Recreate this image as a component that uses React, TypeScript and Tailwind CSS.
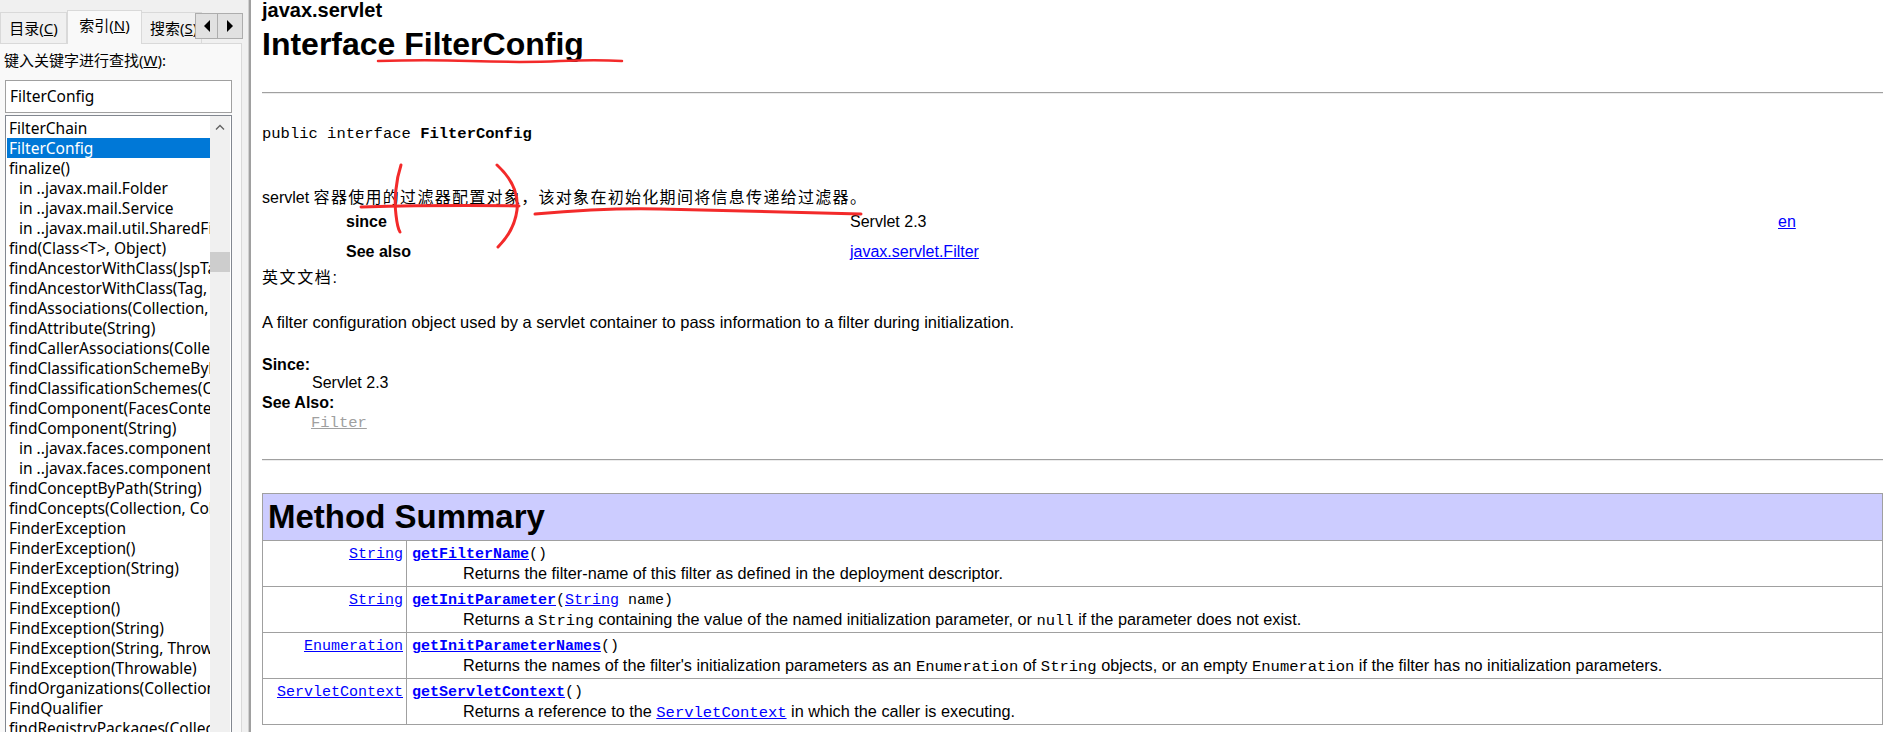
import React from 'react';

const ui = "font-['Noto_Sans','Noto_Sans_CJK_SC',sans-serif]";
const doc = "font-['Liberation_Sans','Noto_Sans_CJK_SC',sans-serif]";
const mono = "font-['Liberation_Mono','Noto_Sans_CJK_SC',monospace]";

type Item = { text: string; indent?: boolean; selected?: boolean };

const items: Item[] = [
  { text: 'FilterChain' },
  { text: 'FilterConfig', selected: true },
  { text: 'finalize()' },
  { text: 'in ..javax.mail.Folder', indent: true },
  { text: 'in ..javax.mail.Service', indent: true },
  { text: 'in ..javax.mail.util.SharedFileInputStream', indent: true },
  { text: 'find(Class<T>, Object)' },
  { text: 'findAncestorWithClass(JspTag, Class)' },
  { text: 'findAncestorWithClass(Tag, Class)' },
  { text: 'findAssociations(Collection, String)' },
  { text: 'findAttribute(String)' },
  { text: 'findCallerAssociations(Collection)' },
  { text: 'findClassificationSchemeByName(Collection)' },
  { text: 'findClassificationSchemes(Collection)' },
  { text: 'findComponent(FacesContext)' },
  { text: 'findComponent(String)' },
  { text: 'in ..javax.faces.component.UIComponent', indent: true },
  { text: 'in ..javax.faces.component.UIComponentBase', indent: true },
  { text: 'findConceptByPath(String)' },
  { text: 'findConcepts(Collection, Collection)' },
  { text: 'FinderException' },
  { text: 'FinderException()' },
  { text: 'FinderException(String)' },
  { text: 'FindException' },
  { text: 'FindException()' },
  { text: 'FindException(String)' },
  { text: 'FindException(String, Throwable)' },
  { text: 'FindException(Throwable)' },
  { text: 'findOrganizations(Collection)' },
  { text: 'FindQualifier' },
  { text: 'findRegistryPackages(Collection)' },
];

function Tri({ dir }: { dir: 'left' | 'right' }) {
  return (
    <svg width="8" height="12" viewBox="0 0 8 12">
      {dir === 'left' ? <path d="M7 0 L1 6 L7 12 Z" fill="#000" /> : <path d="M1 0 L7 6 L1 12 Z" fill="#000" />}
    </svg>
  );
}

function LeftPane() {
  return (
    <div className={`w-[249px] shrink-0 h-full bg-[#f0f0f0] flex ${ui}`}>
      <div className="w-[242px] h-full flex flex-col">
        {/* tab strip */}
        <div className="h-[43px] shrink-0 relative flex items-end">
          <div className="h-[31px] w-[67px] border border-b-0 border-[#d9d9d9] flex items-center justify-center text-[15px] text-black">
            目录(<span className="underline">C</span>)
          </div>
          <div className="h-[34px] w-[75px] border border-b-0 border-[#d9d9d9] bg-[#f9f9f9] flex items-center justify-center text-[15px] text-black -mb-px z-10 pb-[4px]">
            索引(<span className="underline">N</span>)
          </div>
          <div className="h-[31px] w-[60px] border border-b-0 border-l-0 border-[#d9d9d9] flex items-center pl-[8px] text-[15px] text-black overflow-hidden whitespace-nowrap">
            搜索(<span className="underline">S</span>)
          </div>
          <div className="absolute left-[195px] top-[13px] flex">
            <div className="w-[23px] h-[26px] bg-[#e1e1e1] border border-[#adadad] flex items-center justify-center">
              <Tri dir="left" />
            </div>
            <div className="w-[25px] h-[26px] bg-[#e1e1e1] border border-l-0 border-[#adadad] flex items-center justify-center">
              <Tri dir="right" />
            </div>
          </div>
        </div>
        {/* tab page */}
        <div className="flex-1 bg-[#f9f9f9] border-t border-r border-[#d9d9d9] relative overflow-hidden">
          <div className="h-[30px] pt-[4px] pl-[4px] text-[15px] leading-[24px] text-black whitespace-nowrap">
            键入关键字进行查找(<span className="underline">W</span>):
          </div>
          <div className="ml-[5px] mt-[6px] w-[227px] h-[33px] bg-white border border-[#a0a0a0] pl-[4px] text-[15.5px] leading-[30px] text-black">
            FilterConfig
          </div>
          <div className="ml-[5px] mt-[2px] w-[227px] h-[700px] bg-white border border-[#828790] flex">
            <div className="w-[204px] pt-[2px] overflow-hidden">
              {items.map((it, i) => (
                <div
                  key={i}
                  className={`h-[20px] ml-px pl-[2px] text-[15.5px] leading-[20px] whitespace-nowrap ${
                    it.selected ? 'bg-[#0078d7] text-white' : 'text-black'
                  }`}
                >
                  {it.indent ? <span className="pl-[10px]">{it.text}</span> : it.text}
                </div>
              ))}
            </div>
            <div className="w-[20px] bg-[#f0f0f0] flex flex-col items-center">
              <div className="h-[22px] flex items-center justify-center">
                <svg width="10" height="6" viewBox="0 0 10 6">
                  <path d="M1 5.5 L5 1.5 L9 5.5" fill="none" stroke="#606060" strokeWidth="1.3" />
                </svg>
              </div>
              <div className="mt-[114px] w-[20px] h-[20px] bg-[#cdcdcd]" />
            </div>
          </div>
        </div>
      </div>
      <div className="flex-1 border-r border-[#d0d0d0]" />
    </div>
  );
}

const code = `${mono} text-[15.5px]`;

const rows = [
  {
    type: 'String',
    name: 'getFilterName',
    args: <>()</>,
    desc: <>Returns the filter-name of this filter as defined in the deployment descriptor.</>,
  },
  {
    type: 'String',
    name: 'getInitParameter',
    args: (
      <>
        (<span className="text-[#0000ff] underline">String</span>&nbsp;name)
      </>
    ),
    desc: (
      <>
        Returns a <span className={code}>String</span> containing the value of the named initialization parameter, or{' '}
        <span className={code}>null</span> if the parameter does not exist.
      </>
    ),
  },
  {
    type: 'Enumeration',
    name: 'getInitParameterNames',
    args: <>()</>,
    desc: (
      <>
        Returns the names of the filter's initialization parameters as an <span className={code}>Enumeration</span> of{' '}
        <span className={code}>String</span> objects, or an empty <span className={code}>Enumeration</span> if the filter
        has no initialization parameters.
      </>
    ),
  },
  {
    type: 'ServletContext',
    name: 'getServletContext',
    args: <>()</>,
    desc: (
      <>
        Returns a reference to the <span className={`${code} text-[#0000ff] underline`}>ServletContext</span> in which the
        caller is executing.
      </>
    ),
  },
];

function RightPane() {
  return (
    <div className={`flex-1 h-full bg-white border-l-2 border-[#a0a0a0] pl-[11px] pr-[2px] overflow-hidden text-black ${doc}`}>
      <div className="-mt-[2px] h-[24px] text-[20px] leading-[24px] font-bold whitespace-nowrap">javax.servlet</div>
      <div className="mt-[4px] h-[36px] text-[32px] leading-[36px] font-bold whitespace-nowrap">Interface FilterConfig</div>
      <div className="mt-[30px] h-[2px] border-t border-[#a0a0a0] border-b border-b-[#ececec]" />
      <div className={`mt-[30px] h-[20px] leading-[20px] text-[15.5px] whitespace-nowrap ${mono}`}>
        public interface <b>FilterConfig</b>
      </div>
      <div className="mt-[44px] h-[20px] leading-[20px] text-[16px] whitespace-nowrap">
        servlet <span className="tracking-[1.3px]">容器使用的过滤器配置对象，该对象在初始化期间将信息传递给过滤器。</span>
      </div>
      <div className="flex h-[28px] items-center text-[16px] whitespace-nowrap">
        <div className="w-[588px] pl-[84px] font-bold">since</div>
        <div className="w-[928px]">Servlet 2.3</div>
        <div className="text-[#0000ff] underline">en</div>
      </div>
      <div className="flex h-[32px] items-center text-[16px] whitespace-nowrap">
        <div className="w-[588px] pl-[84px] font-bold">See also</div>
        <div className="text-[#0000ff] underline">javax.servlet.Filter</div>
      </div>
      <div className="h-[20px] leading-[20px] text-[16px] tracking-[1.6px]">英文文档:</div>
      <div className="mt-[24px] h-[20px] leading-[20px] text-[16.5px] whitespace-nowrap">
        A filter configuration object used by a servlet container to pass information to a filter during initialization.
      </div>
      <div className="mt-[24px] text-[16px] whitespace-nowrap">
        <div className="h-[18px] leading-[18px] font-bold">Since:</div>
        <div className="h-[18px] leading-[18px] pl-[50px]">Servlet 2.3</div>
        <div className="mt-px h-[20px] leading-[20px] font-bold">See Also:</div>
        <div className={`h-[20px] leading-[20px] pl-[49px] text-[15.5px] text-[#a0a0a0] underline ${mono}`}>Filter</div>
      </div>
      <div className="mt-[26px] h-[2px] border-t border-[#a0a0a0] border-b border-b-[#ececec]" />
      <div className="mt-[32px] w-[1621px] border border-[#a0a0a0]">
        <div className="h-[46px] bg-[#ccccff] pl-[5px] flex items-center text-[33px] font-bold whitespace-nowrap">
          Method Summary
        </div>
        {rows.map((r) => (
          <div key={r.name} className="flex h-[46px] border-t border-[#a0a0a0]">
            <div
              className={`w-[144px] shrink-0 border-r border-[#a0a0a0] pr-[3px] pt-[4px] text-right text-[15px] leading-[19px] text-[#0000ff] ${mono}`}
            >
              <span className="underline">{r.type}</span>
            </div>
            <div className="flex-1 pl-[5px] pt-[4px] whitespace-nowrap">
              <div className={`h-[19px] leading-[19px] text-[15px] ${mono}`}>
                <b className="text-[#0000ff] underline">{r.name}</b>
                {r.args}
              </div>
              <div className="h-[19px] leading-[19px] text-[16.25px] pl-[51px]">{r.desc}</div>
            </div>
          </div>
        ))}
      </div>
    </div>
  );
}

function Annotations() {
  return (
    <svg className="absolute left-0 top-0 pointer-events-none" width="1885" height="732" viewBox="0 0 1885 732">
      <g fill="none" stroke="#f32a2a" strokeLinecap="round" strokeLinejoin="round">
        <path strokeWidth="2.5" d="M378 61 C 410 60, 440 60, 470 61 C 500 62, 540 62, 560 61 C 585 60, 605 60, 622 61" />
        <path strokeWidth="3" d="M401 165 C 396 180, 394 200, 396 215 C 397 224, 398 229, 400 232" />
        <path strokeWidth="3" d="M361 207 C 400 206, 460 205, 519 206" />
        <path strokeWidth="3" d="M497 165 C 510 177, 519 192, 517 210 C 515 226, 507 238, 498 247" />
        <path strokeWidth="3" d="M535 214 C 580 210, 620 208, 660 209 C 720 210, 780 212, 861 214" />
      </g>
    </svg>
  );
}

export default function App() {
  return (
    <div className="relative w-[1885px] h-[732px] overflow-hidden bg-white flex">
      <LeftPane />
      <RightPane />
      <Annotations />
    </div>
  );
}
